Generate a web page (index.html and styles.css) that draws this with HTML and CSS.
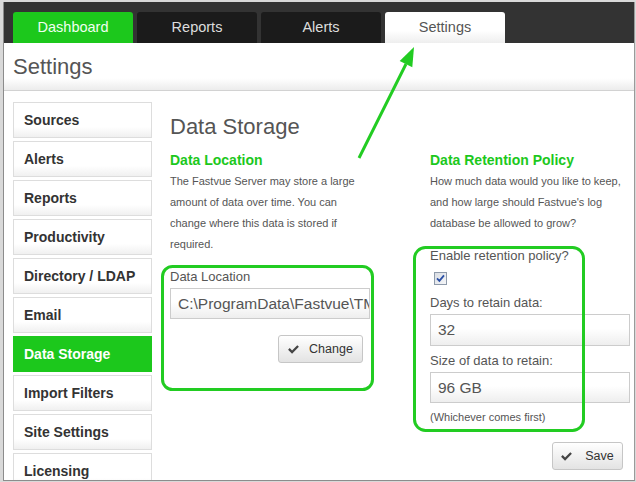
FILE: index.html
```html
<!DOCTYPE html>
<html lang="en">
<head>
  <meta charset="UTF-8" />
  <meta name="viewport" content="width=device-width, initial-scale=1.0"/>
  <title>Fastvue - Settings</title>
  <link rel="stylesheet" href="styles.css">
</head>
<body>

<div class="window">
  <nav class="topbar">
    <a href="#" class="tab tab-home">Dashboard</a>
    <a href="#" class="tab">Reports</a>
    <a href="#" class="tab">Alerts</a>
    <a href="#" class="tab tab-current">Settings</a>
  </nav>

  <header class="page-head">
    <h1>Settings</h1>
  </header>

  <div class="layout">
    <ul class="side-menu">
      <li><a href="#">Sources</a></li>
      <li><a href="#">Alerts</a></li>
      <li><a href="#">Reports</a></li>
      <li><a href="#">Productivity</a></li>
      <li><a href="#">Directory / LDAP</a></li>
      <li><a href="#">Email</a></li>
      <li><a href="#" class="selected">Data Storage</a></li>
      <li><a href="#">Import Filters</a></li>
      <li><a href="#">Site Settings</a></li>
      <li><a href="#">Licensing</a></li>
    </ul>

    <main class="content">
      <h2>Data Storage</h2>
      <div class="columns">
        <section class="col">
          <h3>Data Location</h3>
          <p>The Fastvue Server may store a large amount of data over time. You can change where this data is stored if required.</p>
          <div class="fields">
            <label class="field-label" for="data-path">Data Location</label>
            <input type="text" id="data-path" class="text-input" value="C:\ProgramData\Fastvue\TMG Reporter\Data">
            <div class="btn-row">
              <button class="btn btn-change">
                <svg class="btn-icon" viewBox="0 0 12 10"><path d="M0 5.2 L1.8 3.4 L4.4 6 L10.2 0.2 L12 2 L4.4 9.6 Z"/></svg>
                Change
              </button>
            </div>
          </div>
        </section>

        <section class="col">
          <h3>Data Retention Policy</h3>
          <p>How much data would you like to keep, and how large should Fastvue's log database be allowed to grow?</p>
          <div class="fields">
            <span class="field-label">Enable retention policy?</span>
            <svg class="check" viewBox="0 0 13 13">
              <defs>
                <linearGradient id="box-fill" x1="0" y1="0" x2="1" y2="1">
                  <stop offset="0" stop-color="#d8dce2"/>
                  <stop offset="1" stop-color="#f6f7f9"/>
                </linearGradient>
              </defs>
              <rect x="0.5" y="0.5" width="12" height="12" fill="url(#box-fill)" stroke="#8e9aaa"/>
              <path d="M3 6.3 L5.4 8.8 L10 3.4" fill="none" stroke="#2a4fa5" stroke-width="1.8"/>
            </svg>
            <label class="field-label" for="days">Days to retain data:</label>
            <input type="text" id="days" class="text-input tall" value="32">
            <label class="field-label gap-top" for="size">Size of data to retain:</label>
            <input type="text" id="size" class="text-input" value="96 GB">
            <div class="note">(Whichever comes first)</div>
            <div class="btn-row save-row">
              <button class="btn btn-save">
                <svg class="btn-icon" viewBox="0 0 12 10"><path d="M0 5.2 L1.8 3.4 L4.4 6 L10.2 0.2 L12 2 L4.4 9.6 Z"/></svg>
                Save
              </button>
            </div>
          </div>
        </section>
      </div>
    </main>
  </div>
</div>

<!-- callouts drawn over the page -->
<svg class="notes" width="636" height="482" viewBox="0 0 636 482">
  <rect x="162.5" y="266.5" width="210" height="123" rx="10" />
  <rect x="414.5" y="247.5" width="169" height="183" rx="11" />
  <line x1="359" y1="158" x2="406" y2="64" />
  <polygon points="414,47 412.3,67.2 399.7,61" />
</svg>

</body>
</html>
```

FILE: styles.css
```css
body {
  margin: 0;
  background: #d9d9d9;
  font-family: "Liberation Sans", Arial, sans-serif;
  position: relative;
}

.window {
  margin: 2px 0 0 3px;
  width: 630px;
  height: 478px;
  border-left: 1px solid #8c8c8c;
  border-right: 1px solid #9a9a9a;
  border-bottom: 1px solid #8c8c8c;
  background: white;
  overflow: hidden;
}

/* top navigation */
.topbar {
  display: flex;
  gap: 4px;
  height: 41px;
  box-sizing: border-box;
  padding: 10px 0 0 9px;
  background: #333;
}

.tab {
  width: 120px;
  height: 31px;
  line-height: 31px;
  text-align: center;
  font-size: 14.5px;
  color: #ddd;
  text-decoration: none;
  background: #1b1b1b;
  border-radius: 3px 3px 0 0;
}

.tab-home {
  background: #1cc81c;
  color: #effff0;
}

.tab-current {
  background: linear-gradient(#fff 60%, #eeeeee);
  color: #555;
}

.page-head {
  height: 48px;
  box-sizing: border-box;
  padding: 11px 0 0 9px;
  border-bottom: 1px solid #d2d2d2;
  background: linear-gradient(#fff 75%, #ececec);
}

h1 {
  margin: 0;
  font-size: 22px;
  line-height: 26px;
  font-weight: normal;
  color: #555;
}

/* sidebar + content */
.layout {
  display: flex;
  gap: 18px;
  padding: 11px 0 0 9px;
}

.side-menu {
  list-style: none;
  margin: 0;
  padding: 0;
  width: 139px;
  flex-shrink: 0;
  display: flex;
  flex-direction: column;
  gap: 3px;
}

.side-menu a {
  display: block;
  height: 36px;
  box-sizing: border-box;
  padding-left: 10px;
  line-height: 35px;
  border: 1px solid #dddddd;
  font-size: 14px;
  font-weight: bold;
  color: #333;
  text-decoration: none;
  background: linear-gradient(#fff 70%, #f0f0f0);
}

.side-menu a.selected {
  background: #1cc81c;
  border-color: #1cc81c;
  color: white;
}

.content {
  width: 460px;
  padding-top: 12px;
}

h2 {
  margin: 0 0 12px;
  font-size: 22px;
  line-height: 26px;
  font-weight: normal;
  color: #555;
}

.columns {
  display: flex;
  gap: 60px;
}

.col {
  width: 200px;
}

h3 {
  margin: 0 0 2px;
  font-size: 14px;
  line-height: 17px;
  color: #1cc81c;
}

.col p {
  margin: 0;
  font-size: 11px;
  line-height: 21px;
  color: #555;
}

.fields {
  margin-top: 14px;
}

.field-label {
  display: block;
  margin-bottom: 3px;
  font-size: 13px;
  line-height: 16px;
  color: #555;
}

.gap-top {
  margin-top: 7px;
}

.text-input {
  display: block;
  width: 200px;
  height: 31px;
  box-sizing: border-box;
  margin: 0;
  padding: 0 0 0 7px;
  border: 1px solid #cccccc;
  font-family: "Liberation Sans", Arial, sans-serif;
  font-size: 15.5px;
  color: #555;
  background: linear-gradient(#fff 45%, #eeeeee);
}

.text-input.tall {
  height: 32px;
}

.check {
  display: block;
  width: 13px;
  height: 13px;
  margin: 8px 0 10px 4px;
}

.note {
  margin-top: 7px;
  font-size: 11px;
  line-height: 14px;
  color: #555;
}

.btn-row {
  display: flex;
  justify-content: flex-end;
  padding-right: 7px;
  margin-top: 16px;
}

.save-row {
  margin-top: 18px;
}

.btn {
  display: inline-flex;
  align-items: center;
  justify-content: center;
  gap: 10px;
  height: 28px;
  box-sizing: border-box;
  padding: 0;
  border: 1px solid #c6c6c6;
  border-radius: 3px;
  background: linear-gradient(#fff, #e3e3e3);
  font-family: "Liberation Sans", Arial, sans-serif;
  font-size: 12.5px;
  color: #333;
}

.btn-change {
  width: 85px;
}

.btn-save {
  width: 71px;
  gap: 13px;
}

.btn-icon {
  width: 11px;
  height: 9px;
  fill: #444;
}

/* green callouts */
.notes {
  position: absolute;
  left: 0;
  top: 0;
  pointer-events: none;
}

.notes rect,
.notes line {
  fill: none;
  stroke: #22cc22;
  stroke-width: 3;
}

.notes polygon {
  fill: #22cc22;
}
```
